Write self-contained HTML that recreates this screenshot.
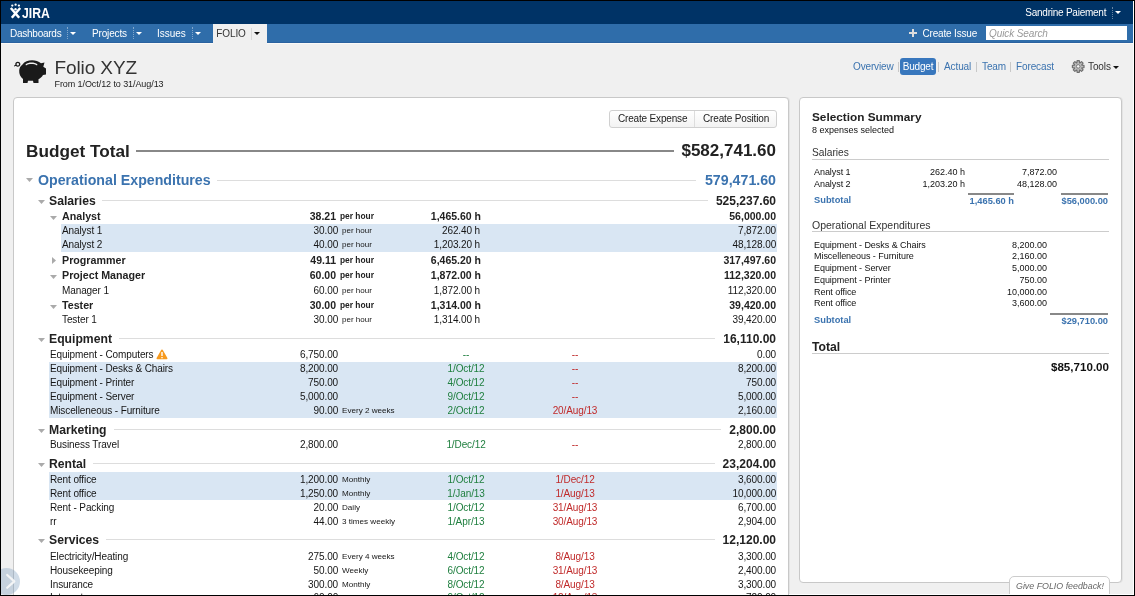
<!DOCTYPE html>
<html><head><meta charset="utf-8"><style>
html,body{margin:0;padding:0;}
body{width:1135px;height:596px;overflow:hidden;position:relative;background:#f0f0f0;font-family:"Liberation Sans",sans-serif;}
.t{position:absolute;line-height:20px;height:20px;white-space:nowrap;}
</style></head><body><div style="position:absolute;left:0;top:0;width:1135px;height:596px;will-change:transform;">
<div style="position:absolute;left:1px;top:1px;width:1133px;height:23px;background:#003366;"></div>
<div style="position:absolute;left:1px;top:24px;width:1133px;height:18px;background:#2f6daa;"></div>
<div style="position:absolute;left:1px;top:42px;width:1133px;height:1px;background:#2a62a0;"></div>
<div style="position:absolute;left:1px;top:43px;width:1133px;height:1px;background:#fbfaf7;"></div>
<svg style="position:absolute;left:9px;top:3px" width="13" height="16" viewBox="0 0 13 16">
<circle cx="3.3" cy="2.6" r="1.15" fill="#fff"/><circle cx="6.6" cy="1.7" r="1.15" fill="#fff"/><circle cx="9.9" cy="2.6" r="1.15" fill="#fff"/>
<circle cx="6.5" cy="6.2" r="1.2" fill="#fff"/>
<path d="M1.8 5.0 L10.2 14.8 M11.2 5.0 L2.8 14.8" stroke="#fff" stroke-width="2.5" fill="none"/>
</svg>
<div class="t" style="left:22px;top:3px;font-size:14px;font-weight:bold;color:#fff;transform:scaleX(0.87);transform-origin:0 0;">JIRA</div>
<div class="t" style="left:606px;width:500.24px;text-align:right;top:3px;font-size:10px;font-weight:normal;color:#fff;font-style:normal;letter-spacing:-0.24px;">Sandrine Paiement</div>
<div style="position:absolute;left:1112px;top:7px;width:0px;height:12px;border-left:1px dotted rgba(255,255,255,0.4);"></div>
<svg style="position:absolute;left:1115px;top:11px" width="6" height="3"><path d="M0 0 L6 0 L3.0 3 Z" fill="#fff"/></svg>
<div class="t" style="left:10px;top:24px;font-size:10px;font-weight:normal;color:#fff;font-style:normal;letter-spacing:-0.25px;">Dashboards</div>
<div style="position:absolute;left:67px;top:27px;width:0px;height:12px;border-left:1px dotted rgba(255,255,255,0.4);"></div>
<svg style="position:absolute;left:70px;top:32px" width="6" height="3"><path d="M0 0 L6 0 L3.0 3 Z" fill="#fff"/></svg>
<div class="t" style="left:92px;top:24px;font-size:10px;font-weight:normal;color:#fff;font-style:normal;letter-spacing:-0.15px;">Projects</div>
<div style="position:absolute;left:133px;top:27px;width:0px;height:12px;border-left:1px dotted rgba(255,255,255,0.4);"></div>
<svg style="position:absolute;left:136px;top:32px" width="6" height="3"><path d="M0 0 L6 0 L3.0 3 Z" fill="#fff"/></svg>
<div class="t" style="left:157px;top:24px;font-size:10px;font-weight:normal;color:#fff;font-style:normal;letter-spacing:-0.05px;">Issues</div>
<div style="position:absolute;left:192px;top:27px;width:0px;height:12px;border-left:1px dotted rgba(255,255,255,0.4);"></div>
<svg style="position:absolute;left:195px;top:32px" width="6" height="3"><path d="M0 0 L6 0 L3.0 3 Z" fill="#fff"/></svg>
<div style="position:absolute;left:213px;top:24px;width:54px;height:20px;background:#f0f0f0;"></div>
<div class="t" style="left:216.3px;top:24px;font-size:10px;font-weight:normal;color:#333;font-style:normal;letter-spacing:-0.1px;">FOLIO</div>
<div style="position:absolute;left:251px;top:28px;width:1px;height:12px;background:#d8d8d8;"></div>
<svg style="position:absolute;left:254px;top:32px" width="6" height="3"><path d="M0 0 L6 0 L3.0 3 Z" fill="#111"/></svg>
<div style="position:absolute;left:909px;top:32px;width:8px;height:2px;background:#ddd;"></div>
<div style="position:absolute;left:912px;top:29px;width:2px;height:8px;background:#ddd;"></div>
<div class="t" style="left:477px;width:500.17px;text-align:right;top:24px;font-size:10px;font-weight:normal;color:#fff;font-style:normal;letter-spacing:-0.17px;">Create Issue</div>
<div style="position:absolute;left:986px;top:26px;width:141px;height:14px;background:#fff;"></div>
<div class="t" style="left:989px;top:24px;font-size:10px;font-weight:normal;color:#999;font-style:italic;letter-spacing:-0.1px;">Quick Search</div>
<svg style="position:absolute;left:14px;top:59px" width="34" height="25" viewBox="0 0 34 25">
<path d="M8.5 5.5 C12 0.3 22 0 27 4.2 L30.5 3.6 L29.3 7.8 L32 9.5 L32 15.5 L29 16 C27.8 18.2 26.3 19.4 24.5 20.2 L24.5 24 L19.5 24 L19 21.8 L14 21.8 L13.5 24 L9 24 L9 20 C6.3 18 5 14.8 5.2 11.5 C5.3 9 6.6 6.9 8.5 5.5 Z" fill="#1a1a1a"/>
<path d="M11.5 5.4 C14.5 2.9 20.5 2.9 23.5 5.4 L23 6.4 C20 4.5 15 4.5 12 6.4 Z" fill="#f0f0f0"/>
<circle cx="3.8" cy="5.2" r="1.9" fill="none" stroke="#1a1a1a" stroke-width="1.3"/>
<path d="M0 7 L2.2 6.3" stroke="#1a1a1a" stroke-width="1"/>
</svg>
<div class="t" style="left:54.5px;top:58px;font-size:19px;font-weight:normal;color:#333;font-style:normal;letter-spacing:-0.1px;">Folio XYZ</div>
<div class="t" style="left:54.5px;top:74px;font-size:9px;font-weight:normal;color:#222;font-style:normal;letter-spacing:-0.08px;">From 1/Oct/12 to 31/Aug/13</div>
<div class="t" style="left:853px;top:57px;font-size:10px;font-weight:normal;color:#3b73af;font-style:normal;letter-spacing:-0.15px;">Overview</div>
<div style="position:absolute;left:898px;top:62px;width:1px;height:10px;background:#c8c8c8;"></div>
<div style="position:absolute;left:900px;top:58px;width:36px;height:17px;background:#3877bd;border-radius:3px;"></div>
<div class="t" style="left:668px;width:500px;text-align:center;top:57px;font-size:10px;font-weight:normal;color:#fff;font-style:normal;letter-spacing:-0.2px;">Budget</div>
<div style="position:absolute;left:938px;top:62px;width:1px;height:10px;background:#c8c8c8;"></div>
<div class="t" style="left:944px;top:57px;font-size:10px;font-weight:normal;color:#3b73af;font-style:normal;letter-spacing:-0.1px;">Actual</div>
<div style="position:absolute;left:976px;top:62px;width:1px;height:10px;background:#c8c8c8;"></div>
<div class="t" style="left:982px;top:57px;font-size:10px;font-weight:normal;color:#3b73af;font-style:normal;letter-spacing:-0.1px;">Team</div>
<div style="position:absolute;left:1010px;top:62px;width:1px;height:10px;background:#c8c8c8;"></div>
<div class="t" style="left:1016px;top:57px;font-size:10px;font-weight:normal;color:#3b73af;font-style:normal;letter-spacing:-0.12px;">Forecast</div>
<svg style="position:absolute;left:1071px;top:59px" width="15" height="15" viewBox="0 0 15 15">
<path d="M10.87 6.18 L13.00 6.39 L13.00 8.61 L10.87 8.82 L10.73 9.16 L12.08 10.82 L10.52 12.38 L8.86 11.03 L8.52 11.17 L8.31 13.30 L6.09 13.30 L5.88 11.17 L5.54 11.03 L3.88 12.38 L2.32 10.82 L3.67 9.16 L3.53 8.82 L1.40 8.61 L1.40 6.39 L3.53 6.18 L3.67 5.84 L2.32 4.18 L3.88 2.62 L5.54 3.97 L5.88 3.83 L6.09 1.70 L8.31 1.70 L8.52 3.83 L8.86 3.97 L10.52 2.62 L12.08 4.18 L10.73 5.84 Z" fill="#bdbdbd" stroke="#6f6f6f" stroke-width="1.2" stroke-linejoin="round"/>
<circle cx="7.2" cy="7.4" r="1.8" fill="#f4f4f4" stroke="#777" stroke-width="1"/></svg>
<div class="t" style="left:1088px;top:57px;font-size:10px;font-weight:normal;color:#333;font-style:normal;letter-spacing:-0.1px;">Tools</div>
<svg style="position:absolute;left:1112.5px;top:66px" width="6" height="3"><path d="M0 0 L6 0 L3.0 3 Z" fill="#111"/></svg>
<div style="position:absolute;left:13px;top:97px;width:776px;height:520px;background:#fff;border:1px solid #c8c8c8;border-radius:4px;box-sizing:border-box;box-shadow:1px 0 0 #e4e4e4;"></div>
<div style="position:absolute;left:799px;top:97px;width:323px;height:486px;background:#fff;border:1px solid #c8c8c8;border-radius:4px;box-sizing:border-box;box-shadow:1px 0 0 #e4e4e4;"></div>
<div style="position:absolute;left:609px;top:110px;width:168px;height:18px;background:linear-gradient(#fff,#f3f3f3);border:1px solid #d0d0d0;border-radius:3px;box-sizing:border-box;"></div>
<div style="position:absolute;left:694px;top:111px;width:1px;height:16px;background:#ddd;"></div>
<div class="t" style="left:618px;top:109px;font-size:10px;font-weight:normal;color:#222;font-style:normal;letter-spacing:-0.17px;">Create Expense</div>
<div class="t" style="left:703px;top:109px;font-size:10px;font-weight:normal;color:#222;font-style:normal;letter-spacing:-0.15px;">Create Position</div>
<div class="t" style="left:26px;top:141px;font-size:17.2px;font-weight:bold;color:#222;font-style:normal;">Budget Total</div>
<div style="position:absolute;left:136px;top:150px;width:538px;height:2px;background:#888;"></div>
<div class="t" style="left:276px;width:500px;text-align:right;top:141px;font-size:17px;font-weight:bold;color:#222;font-style:normal;">$582,741.60</div>
<svg style="position:absolute;left:26px;top:178px" width="7" height="4"><path d="M0 0 L7 0 L3.5 4 Z" fill="#aaa"/></svg>
<div class="t" style="left:38px;top:170px;font-size:14.2px;font-weight:bold;color:#3b73af;font-style:normal;">Operational Expenditures</div>
<div style="position:absolute;left:217px;top:180px;width:479px;height:1px;background:#ddd;"></div>
<div class="t" style="left:276px;width:500px;text-align:right;top:170px;font-size:14.2px;font-weight:bold;color:#3b73af;font-style:normal;">579,471.60</div>
<svg style="position:absolute;left:38px;top:200px" width="7" height="4"><path d="M0 0 L7 0 L3.5 4 Z" fill="#aaa"/></svg>
<div class="t" style="left:49px;top:191px;font-size:12.2px;font-weight:bold;color:#222;font-style:normal;">Salaries</div>
<div style="position:absolute;left:102px;top:200px;width:606px;height:1px;background:#ddd;"></div>
<div class="t" style="left:276px;width:500px;text-align:right;top:191px;font-size:12px;font-weight:bold;color:#222;font-style:normal;">525,237.60</div>
<svg style="position:absolute;left:50px;top:216px" width="7" height="4"><path d="M0 0 L7 0 L3.5 4 Z" fill="#aaa"/></svg>
<div class="t" style="left:62px;top:206px;font-size:10.7px;font-weight:bold;color:#222;font-style:normal;">Analyst</div>
<div class="t" style="left:-164px;width:500px;text-align:right;top:206px;font-size:10.5px;font-weight:bold;color:#222;font-style:normal;">38.21</div>
<div class="t" style="left:340px;top:206px;font-size:8.4px;font-weight:bold;color:#222;font-style:normal;">per hour</div>
<div class="t" style="left:-19px;width:500px;text-align:right;top:206px;font-size:10.5px;font-weight:bold;color:#222;font-style:normal;">1,465.60 h</div>
<div class="t" style="left:276px;width:500px;text-align:right;top:206px;font-size:10.5px;font-weight:bold;color:#222;font-style:normal;">56,000.00</div>
<div style="position:absolute;left:61px;top:224px;width:716px;height:14px;background:#d9e6f3;"></div>
<div class="t" style="left:62px;top:221px;font-size:10px;font-weight:normal;color:#151515;font-style:normal;letter-spacing:-0.1px;">Analyst 1</div>
<div class="t" style="left:-162px;width:500.1px;text-align:right;top:221px;font-size:10px;font-weight:normal;color:#151515;font-style:normal;letter-spacing:-0.1px;">30.00</div>
<div class="t" style="left:342px;top:221px;font-size:8px;font-weight:normal;color:#151515;font-style:normal;">per hour</div>
<div class="t" style="left:-20px;width:500.1px;text-align:right;top:221px;font-size:10px;font-weight:normal;color:#151515;font-style:normal;letter-spacing:-0.1px;">262.40 h</div>
<div class="t" style="left:276px;width:500.1px;text-align:right;top:221px;font-size:10px;font-weight:normal;color:#151515;font-style:normal;letter-spacing:-0.1px;">7,872.00</div>
<div style="position:absolute;left:61px;top:238px;width:716px;height:14px;background:#d9e6f3;"></div>
<div class="t" style="left:62px;top:235px;font-size:10px;font-weight:normal;color:#151515;font-style:normal;letter-spacing:-0.1px;">Analyst 2</div>
<div class="t" style="left:-162px;width:500.1px;text-align:right;top:235px;font-size:10px;font-weight:normal;color:#151515;font-style:normal;letter-spacing:-0.1px;">40.00</div>
<div class="t" style="left:342px;top:235px;font-size:8px;font-weight:normal;color:#151515;font-style:normal;">per hour</div>
<div class="t" style="left:-20px;width:500.1px;text-align:right;top:235px;font-size:10px;font-weight:normal;color:#151515;font-style:normal;letter-spacing:-0.1px;">1,203.20 h</div>
<div class="t" style="left:276px;width:500.1px;text-align:right;top:235px;font-size:10px;font-weight:normal;color:#151515;font-style:normal;letter-spacing:-0.1px;">48,128.00</div>
<svg style="position:absolute;left:52px;top:257px" width="4" height="7"><path d="M0 0 L4 3.5 L0 7 Z" fill="#aaa"/></svg>
<div class="t" style="left:62px;top:250px;font-size:10.7px;font-weight:bold;color:#222;font-style:normal;">Programmer</div>
<div class="t" style="left:-164px;width:500px;text-align:right;top:250px;font-size:10.5px;font-weight:bold;color:#222;font-style:normal;">49.11</div>
<div class="t" style="left:340px;top:250px;font-size:8.4px;font-weight:bold;color:#222;font-style:normal;">per hour</div>
<div class="t" style="left:-19px;width:500px;text-align:right;top:250px;font-size:10.5px;font-weight:bold;color:#222;font-style:normal;">6,465.20 h</div>
<div class="t" style="left:276px;width:500px;text-align:right;top:250px;font-size:10.5px;font-weight:bold;color:#222;font-style:normal;">317,497.60</div>
<svg style="position:absolute;left:50px;top:275px" width="7" height="4"><path d="M0 0 L7 0 L3.5 4 Z" fill="#aaa"/></svg>
<div class="t" style="left:62px;top:265px;font-size:10.7px;font-weight:bold;color:#222;font-style:normal;">Project Manager</div>
<div class="t" style="left:-164px;width:500px;text-align:right;top:265px;font-size:10.5px;font-weight:bold;color:#222;font-style:normal;">60.00</div>
<div class="t" style="left:340px;top:265px;font-size:8.4px;font-weight:bold;color:#222;font-style:normal;">per hour</div>
<div class="t" style="left:-19px;width:500px;text-align:right;top:265px;font-size:10.5px;font-weight:bold;color:#222;font-style:normal;">1,872.00 h</div>
<div class="t" style="left:276px;width:500px;text-align:right;top:265px;font-size:10.5px;font-weight:bold;color:#222;font-style:normal;">112,320.00</div>
<div class="t" style="left:62px;top:281px;font-size:10px;font-weight:normal;color:#151515;font-style:normal;letter-spacing:-0.1px;">Manager 1</div>
<div class="t" style="left:-162px;width:500.1px;text-align:right;top:281px;font-size:10px;font-weight:normal;color:#151515;font-style:normal;letter-spacing:-0.1px;">60.00</div>
<div class="t" style="left:342px;top:281px;font-size:8px;font-weight:normal;color:#151515;font-style:normal;">per hour</div>
<div class="t" style="left:-20px;width:500.1px;text-align:right;top:281px;font-size:10px;font-weight:normal;color:#151515;font-style:normal;letter-spacing:-0.1px;">1,872.00 h</div>
<div class="t" style="left:276px;width:500.1px;text-align:right;top:281px;font-size:10px;font-weight:normal;color:#151515;font-style:normal;letter-spacing:-0.1px;">112,320.00</div>
<svg style="position:absolute;left:50px;top:305px" width="7" height="4"><path d="M0 0 L7 0 L3.5 4 Z" fill="#aaa"/></svg>
<div class="t" style="left:62px;top:295px;font-size:10.7px;font-weight:bold;color:#222;font-style:normal;">Tester</div>
<div class="t" style="left:-164px;width:500px;text-align:right;top:295px;font-size:10.5px;font-weight:bold;color:#222;font-style:normal;">30.00</div>
<div class="t" style="left:340px;top:295px;font-size:8.4px;font-weight:bold;color:#222;font-style:normal;">per hour</div>
<div class="t" style="left:-19px;width:500px;text-align:right;top:295px;font-size:10.5px;font-weight:bold;color:#222;font-style:normal;">1,314.00 h</div>
<div class="t" style="left:276px;width:500px;text-align:right;top:295px;font-size:10.5px;font-weight:bold;color:#222;font-style:normal;">39,420.00</div>
<div class="t" style="left:62px;top:310px;font-size:10px;font-weight:normal;color:#151515;font-style:normal;letter-spacing:-0.1px;">Tester 1</div>
<div class="t" style="left:-162px;width:500.1px;text-align:right;top:310px;font-size:10px;font-weight:normal;color:#151515;font-style:normal;letter-spacing:-0.1px;">30.00</div>
<div class="t" style="left:342px;top:310px;font-size:8px;font-weight:normal;color:#151515;font-style:normal;">per hour</div>
<div class="t" style="left:-20px;width:500.1px;text-align:right;top:310px;font-size:10px;font-weight:normal;color:#151515;font-style:normal;letter-spacing:-0.1px;">1,314.00 h</div>
<div class="t" style="left:276px;width:500.1px;text-align:right;top:310px;font-size:10px;font-weight:normal;color:#151515;font-style:normal;letter-spacing:-0.1px;">39,420.00</div>
<svg style="position:absolute;left:38px;top:338px" width="7" height="4"><path d="M0 0 L7 0 L3.5 4 Z" fill="#aaa"/></svg>
<div class="t" style="left:49px;top:329px;font-size:12.2px;font-weight:bold;color:#222;font-style:normal;">Equipment</div>
<div style="position:absolute;left:119px;top:338px;width:596px;height:1px;background:#ddd;"></div>
<div class="t" style="left:276px;width:500px;text-align:right;top:329px;font-size:12px;font-weight:bold;color:#222;font-style:normal;">16,110.00</div>
<div class="t" style="left:50px;top:345px;font-size:10px;font-weight:normal;color:#151515;font-style:normal;letter-spacing:-0.1px;">Equipment - Computers</div>
<div class="t" style="left:-162px;width:500.1px;text-align:right;top:345px;font-size:10px;font-weight:normal;color:#151515;font-style:normal;letter-spacing:-0.1px;">6,750.00</div>
<div class="t" style="left:216px;width:500px;text-align:center;top:345px;font-size:10px;font-weight:normal;color:#1f7f3f;font-style:normal;letter-spacing:-0.1px;">--</div>
<div class="t" style="left:325px;width:500px;text-align:center;top:345px;font-size:10px;font-weight:normal;color:#c02a2a;font-style:normal;letter-spacing:-0.1px;">--</div>
<div class="t" style="left:276px;width:500.1px;text-align:right;top:345px;font-size:10px;font-weight:normal;color:#151515;font-style:normal;letter-spacing:-0.1px;">0.00</div>
<svg style="position:absolute;left:156px;top:349px" width="12" height="11" viewBox="0 0 12 11">
<path d="M6 0.6 Q6.7 0.6 7.1 1.4 L11.4 9 Q11.8 10.3 10.5 10.3 L1.5 10.3 Q0.2 10.3 0.6 9 L4.9 1.4 Q5.3 0.6 6 0.6 Z" fill="#f79a1e"/>
<rect x="5.3" y="3" width="1.4" height="4" fill="#fff"/><rect x="5.3" y="8" width="1.4" height="1.3" fill="#fff"/></svg>
<div style="position:absolute;left:49px;top:362px;width:728px;height:14px;background:#d9e6f3;"></div>
<div class="t" style="left:50px;top:359px;font-size:10px;font-weight:normal;color:#151515;font-style:normal;letter-spacing:-0.1px;">Equipment - Desks &amp; Chairs</div>
<div class="t" style="left:-162px;width:500.1px;text-align:right;top:359px;font-size:10px;font-weight:normal;color:#151515;font-style:normal;letter-spacing:-0.1px;">8,200.00</div>
<div class="t" style="left:216px;width:500px;text-align:center;top:359px;font-size:10px;font-weight:normal;color:#1f7f3f;font-style:normal;letter-spacing:-0.1px;">1/Oct/12</div>
<div class="t" style="left:325px;width:500px;text-align:center;top:359px;font-size:10px;font-weight:normal;color:#c02a2a;font-style:normal;letter-spacing:-0.1px;">--</div>
<div class="t" style="left:276px;width:500.1px;text-align:right;top:359px;font-size:10px;font-weight:normal;color:#151515;font-style:normal;letter-spacing:-0.1px;">8,200.00</div>
<div style="position:absolute;left:49px;top:376px;width:728px;height:14px;background:#d9e6f3;"></div>
<div class="t" style="left:50px;top:373px;font-size:10px;font-weight:normal;color:#151515;font-style:normal;letter-spacing:-0.1px;">Equipment - Printer</div>
<div class="t" style="left:-162px;width:500.1px;text-align:right;top:373px;font-size:10px;font-weight:normal;color:#151515;font-style:normal;letter-spacing:-0.1px;">750.00</div>
<div class="t" style="left:216px;width:500px;text-align:center;top:373px;font-size:10px;font-weight:normal;color:#1f7f3f;font-style:normal;letter-spacing:-0.1px;">4/Oct/12</div>
<div class="t" style="left:325px;width:500px;text-align:center;top:373px;font-size:10px;font-weight:normal;color:#c02a2a;font-style:normal;letter-spacing:-0.1px;">--</div>
<div class="t" style="left:276px;width:500.1px;text-align:right;top:373px;font-size:10px;font-weight:normal;color:#151515;font-style:normal;letter-spacing:-0.1px;">750.00</div>
<div style="position:absolute;left:49px;top:390px;width:728px;height:14px;background:#d9e6f3;"></div>
<div class="t" style="left:50px;top:387px;font-size:10px;font-weight:normal;color:#151515;font-style:normal;letter-spacing:-0.1px;">Equipment - Server</div>
<div class="t" style="left:-162px;width:500.1px;text-align:right;top:387px;font-size:10px;font-weight:normal;color:#151515;font-style:normal;letter-spacing:-0.1px;">5,000.00</div>
<div class="t" style="left:216px;width:500px;text-align:center;top:387px;font-size:10px;font-weight:normal;color:#1f7f3f;font-style:normal;letter-spacing:-0.1px;">9/Oct/12</div>
<div class="t" style="left:325px;width:500px;text-align:center;top:387px;font-size:10px;font-weight:normal;color:#c02a2a;font-style:normal;letter-spacing:-0.1px;">--</div>
<div class="t" style="left:276px;width:500.1px;text-align:right;top:387px;font-size:10px;font-weight:normal;color:#151515;font-style:normal;letter-spacing:-0.1px;">5,000.00</div>
<div style="position:absolute;left:49px;top:404px;width:728px;height:14px;background:#d9e6f3;"></div>
<div class="t" style="left:50px;top:401px;font-size:10px;font-weight:normal;color:#151515;font-style:normal;letter-spacing:-0.1px;">Miscelleneous - Furniture</div>
<div class="t" style="left:-162px;width:500.1px;text-align:right;top:401px;font-size:10px;font-weight:normal;color:#151515;font-style:normal;letter-spacing:-0.1px;">90.00</div>
<div class="t" style="left:342px;top:401px;font-size:8.1px;font-weight:normal;color:#151515;font-style:normal;">Every 2 weeks</div>
<div class="t" style="left:216px;width:500px;text-align:center;top:401px;font-size:10px;font-weight:normal;color:#1f7f3f;font-style:normal;letter-spacing:-0.1px;">2/Oct/12</div>
<div class="t" style="left:325px;width:500px;text-align:center;top:401px;font-size:10px;font-weight:normal;color:#c02a2a;font-style:normal;letter-spacing:-0.1px;">20/Aug/13</div>
<div class="t" style="left:276px;width:500.1px;text-align:right;top:401px;font-size:10px;font-weight:normal;color:#151515;font-style:normal;letter-spacing:-0.1px;">2,160.00</div>
<svg style="position:absolute;left:38px;top:429px" width="7" height="4"><path d="M0 0 L7 0 L3.5 4 Z" fill="#aaa"/></svg>
<div class="t" style="left:49px;top:420px;font-size:12.2px;font-weight:bold;color:#222;font-style:normal;">Marketing</div>
<div style="position:absolute;left:114px;top:429px;width:607px;height:1px;background:#ddd;"></div>
<div class="t" style="left:276px;width:500px;text-align:right;top:420px;font-size:12px;font-weight:bold;color:#222;font-style:normal;">2,800.00</div>
<div class="t" style="left:50px;top:435px;font-size:10px;font-weight:normal;color:#151515;font-style:normal;letter-spacing:-0.1px;">Business Travel</div>
<div class="t" style="left:-162px;width:500.1px;text-align:right;top:435px;font-size:10px;font-weight:normal;color:#151515;font-style:normal;letter-spacing:-0.1px;">2,800.00</div>
<div class="t" style="left:216px;width:500px;text-align:center;top:435px;font-size:10px;font-weight:normal;color:#1f7f3f;font-style:normal;letter-spacing:-0.1px;">1/Dec/12</div>
<div class="t" style="left:325px;width:500px;text-align:center;top:435px;font-size:10px;font-weight:normal;color:#c02a2a;font-style:normal;letter-spacing:-0.1px;">--</div>
<div class="t" style="left:276px;width:500.1px;text-align:right;top:435px;font-size:10px;font-weight:normal;color:#151515;font-style:normal;letter-spacing:-0.1px;">2,800.00</div>
<svg style="position:absolute;left:38px;top:463px" width="7" height="4"><path d="M0 0 L7 0 L3.5 4 Z" fill="#aaa"/></svg>
<div class="t" style="left:49px;top:454px;font-size:12.2px;font-weight:bold;color:#222;font-style:normal;">Rental</div>
<div style="position:absolute;left:93px;top:463px;width:622px;height:1px;background:#ddd;"></div>
<div class="t" style="left:276px;width:500px;text-align:right;top:454px;font-size:12px;font-weight:bold;color:#222;font-style:normal;">23,204.00</div>
<div style="position:absolute;left:49px;top:472px;width:728px;height:14px;background:#d9e6f3;"></div>
<div class="t" style="left:50px;top:470px;font-size:10px;font-weight:normal;color:#151515;font-style:normal;letter-spacing:-0.1px;">Rent office</div>
<div class="t" style="left:-162px;width:500.1px;text-align:right;top:470px;font-size:10px;font-weight:normal;color:#151515;font-style:normal;letter-spacing:-0.1px;">1,200.00</div>
<div class="t" style="left:342px;top:470px;font-size:8.1px;font-weight:normal;color:#151515;font-style:normal;">Monthly</div>
<div class="t" style="left:216px;width:500px;text-align:center;top:470px;font-size:10px;font-weight:normal;color:#1f7f3f;font-style:normal;letter-spacing:-0.1px;">1/Oct/12</div>
<div class="t" style="left:325px;width:500px;text-align:center;top:470px;font-size:10px;font-weight:normal;color:#c02a2a;font-style:normal;letter-spacing:-0.1px;">1/Dec/12</div>
<div class="t" style="left:276px;width:500.1px;text-align:right;top:470px;font-size:10px;font-weight:normal;color:#151515;font-style:normal;letter-spacing:-0.1px;">3,600.00</div>
<div style="position:absolute;left:49px;top:486px;width:728px;height:14px;background:#d9e6f3;"></div>
<div class="t" style="left:50px;top:484px;font-size:10px;font-weight:normal;color:#151515;font-style:normal;letter-spacing:-0.1px;">Rent office</div>
<div class="t" style="left:-162px;width:500.1px;text-align:right;top:484px;font-size:10px;font-weight:normal;color:#151515;font-style:normal;letter-spacing:-0.1px;">1,250.00</div>
<div class="t" style="left:342px;top:484px;font-size:8.1px;font-weight:normal;color:#151515;font-style:normal;">Monthly</div>
<div class="t" style="left:216px;width:500px;text-align:center;top:484px;font-size:10px;font-weight:normal;color:#1f7f3f;font-style:normal;letter-spacing:-0.1px;">1/Jan/13</div>
<div class="t" style="left:325px;width:500px;text-align:center;top:484px;font-size:10px;font-weight:normal;color:#c02a2a;font-style:normal;letter-spacing:-0.1px;">1/Aug/13</div>
<div class="t" style="left:276px;width:500.1px;text-align:right;top:484px;font-size:10px;font-weight:normal;color:#151515;font-style:normal;letter-spacing:-0.1px;">10,000.00</div>
<div class="t" style="left:50px;top:498px;font-size:10px;font-weight:normal;color:#151515;font-style:normal;letter-spacing:-0.1px;">Rent - Packing</div>
<div class="t" style="left:-162px;width:500.1px;text-align:right;top:498px;font-size:10px;font-weight:normal;color:#151515;font-style:normal;letter-spacing:-0.1px;">20.00</div>
<div class="t" style="left:342px;top:498px;font-size:8.1px;font-weight:normal;color:#151515;font-style:normal;">Daily</div>
<div class="t" style="left:216px;width:500px;text-align:center;top:498px;font-size:10px;font-weight:normal;color:#1f7f3f;font-style:normal;letter-spacing:-0.1px;">1/Oct/12</div>
<div class="t" style="left:325px;width:500px;text-align:center;top:498px;font-size:10px;font-weight:normal;color:#c02a2a;font-style:normal;letter-spacing:-0.1px;">31/Aug/13</div>
<div class="t" style="left:276px;width:500.1px;text-align:right;top:498px;font-size:10px;font-weight:normal;color:#151515;font-style:normal;letter-spacing:-0.1px;">6,700.00</div>
<div class="t" style="left:50px;top:512px;font-size:10px;font-weight:normal;color:#151515;font-style:normal;letter-spacing:-0.1px;">rr</div>
<div class="t" style="left:-162px;width:500.1px;text-align:right;top:512px;font-size:10px;font-weight:normal;color:#151515;font-style:normal;letter-spacing:-0.1px;">44.00</div>
<div class="t" style="left:342px;top:512px;font-size:8.1px;font-weight:normal;color:#151515;font-style:normal;">3 times weekly</div>
<div class="t" style="left:216px;width:500px;text-align:center;top:512px;font-size:10px;font-weight:normal;color:#1f7f3f;font-style:normal;letter-spacing:-0.1px;">1/Apr/13</div>
<div class="t" style="left:325px;width:500px;text-align:center;top:512px;font-size:10px;font-weight:normal;color:#c02a2a;font-style:normal;letter-spacing:-0.1px;">30/Aug/13</div>
<div class="t" style="left:276px;width:500.1px;text-align:right;top:512px;font-size:10px;font-weight:normal;color:#151515;font-style:normal;letter-spacing:-0.1px;">2,904.00</div>
<svg style="position:absolute;left:38px;top:539px" width="7" height="4"><path d="M0 0 L7 0 L3.5 4 Z" fill="#aaa"/></svg>
<div class="t" style="left:49px;top:530px;font-size:12.2px;font-weight:bold;color:#222;font-style:normal;">Services</div>
<div style="position:absolute;left:106px;top:539px;width:609px;height:1px;background:#ddd;"></div>
<div class="t" style="left:276px;width:500px;text-align:right;top:530px;font-size:12px;font-weight:bold;color:#222;font-style:normal;">12,120.00</div>
<div class="t" style="left:50px;top:547px;font-size:10px;font-weight:normal;color:#151515;font-style:normal;letter-spacing:-0.1px;">Electricity/Heating</div>
<div class="t" style="left:-162px;width:500.1px;text-align:right;top:547px;font-size:10px;font-weight:normal;color:#151515;font-style:normal;letter-spacing:-0.1px;">275.00</div>
<div class="t" style="left:342px;top:547px;font-size:8.1px;font-weight:normal;color:#151515;font-style:normal;">Every 4 weeks</div>
<div class="t" style="left:216px;width:500px;text-align:center;top:547px;font-size:10px;font-weight:normal;color:#1f7f3f;font-style:normal;letter-spacing:-0.1px;">4/Oct/12</div>
<div class="t" style="left:325px;width:500px;text-align:center;top:547px;font-size:10px;font-weight:normal;color:#c02a2a;font-style:normal;letter-spacing:-0.1px;">8/Aug/13</div>
<div class="t" style="left:276px;width:500.1px;text-align:right;top:547px;font-size:10px;font-weight:normal;color:#151515;font-style:normal;letter-spacing:-0.1px;">3,300.00</div>
<div class="t" style="left:50px;top:561px;font-size:10px;font-weight:normal;color:#151515;font-style:normal;letter-spacing:-0.1px;">Housekeeping</div>
<div class="t" style="left:-162px;width:500.1px;text-align:right;top:561px;font-size:10px;font-weight:normal;color:#151515;font-style:normal;letter-spacing:-0.1px;">50.00</div>
<div class="t" style="left:342px;top:561px;font-size:8.1px;font-weight:normal;color:#151515;font-style:normal;">Weekly</div>
<div class="t" style="left:216px;width:500px;text-align:center;top:561px;font-size:10px;font-weight:normal;color:#1f7f3f;font-style:normal;letter-spacing:-0.1px;">6/Oct/12</div>
<div class="t" style="left:325px;width:500px;text-align:center;top:561px;font-size:10px;font-weight:normal;color:#c02a2a;font-style:normal;letter-spacing:-0.1px;">31/Aug/13</div>
<div class="t" style="left:276px;width:500.1px;text-align:right;top:561px;font-size:10px;font-weight:normal;color:#151515;font-style:normal;letter-spacing:-0.1px;">2,400.00</div>
<div class="t" style="left:50px;top:575px;font-size:10px;font-weight:normal;color:#151515;font-style:normal;letter-spacing:-0.1px;">Insurance</div>
<div class="t" style="left:-162px;width:500.1px;text-align:right;top:575px;font-size:10px;font-weight:normal;color:#151515;font-style:normal;letter-spacing:-0.1px;">300.00</div>
<div class="t" style="left:342px;top:575px;font-size:8.1px;font-weight:normal;color:#151515;font-style:normal;">Monthly</div>
<div class="t" style="left:216px;width:500px;text-align:center;top:575px;font-size:10px;font-weight:normal;color:#1f7f3f;font-style:normal;letter-spacing:-0.1px;">8/Oct/12</div>
<div class="t" style="left:325px;width:500px;text-align:center;top:575px;font-size:10px;font-weight:normal;color:#c02a2a;font-style:normal;letter-spacing:-0.1px;">8/Aug/13</div>
<div class="t" style="left:276px;width:500.1px;text-align:right;top:575px;font-size:10px;font-weight:normal;color:#151515;font-style:normal;letter-spacing:-0.1px;">3,300.00</div>
<div class="t" style="left:50px;top:588px;font-size:10px;font-weight:normal;color:#151515;font-style:normal;letter-spacing:-0.1px;">Internet</div>
<div class="t" style="left:-162px;width:500.1px;text-align:right;top:588px;font-size:10px;font-weight:normal;color:#151515;font-style:normal;letter-spacing:-0.1px;">60.00</div>
<div class="t" style="left:342px;top:588px;font-size:8.1px;font-weight:normal;color:#151515;font-style:normal;">Every 4 weeks</div>
<div class="t" style="left:216px;width:500px;text-align:center;top:588px;font-size:10px;font-weight:normal;color:#1f7f3f;font-style:normal;letter-spacing:-0.1px;">9/Oct/12</div>
<div class="t" style="left:325px;width:500px;text-align:center;top:588px;font-size:10px;font-weight:normal;color:#c02a2a;font-style:normal;letter-spacing:-0.1px;">12/Aug/13</div>
<div class="t" style="left:276px;width:500.1px;text-align:right;top:588px;font-size:10px;font-weight:normal;color:#151515;font-style:normal;letter-spacing:-0.1px;">720.00</div>
<div class="t" style="left:812px;top:107px;font-size:11.8px;font-weight:bold;color:#222;font-style:normal;">Selection Summary</div>
<div class="t" style="left:812px;top:120px;font-size:9px;font-weight:normal;color:#111;font-style:normal;">8 expenses selected</div>
<div class="t" style="left:812px;top:143px;font-size:10.2px;font-weight:normal;color:#333;font-style:normal;">Salaries</div>
<div style="position:absolute;left:812px;top:159px;width:297px;height:1px;background:#ccc;"></div>
<div class="t" style="left:814px;top:162px;font-size:9px;font-weight:normal;color:#111;font-style:normal;letter-spacing:-0.05px;">Analyst 1</div>
<div class="t" style="left:465px;width:500px;text-align:right;top:162px;font-size:9px;font-weight:normal;color:#111;font-style:normal;">262.40 h</div>
<div class="t" style="left:557px;width:500px;text-align:right;top:162px;font-size:9px;font-weight:normal;color:#111;font-style:normal;">7,872.00</div>
<div class="t" style="left:814px;top:174px;font-size:9px;font-weight:normal;color:#111;font-style:normal;letter-spacing:-0.05px;">Analyst 2</div>
<div class="t" style="left:465px;width:500px;text-align:right;top:174px;font-size:9px;font-weight:normal;color:#111;font-style:normal;">1,203.20 h</div>
<div class="t" style="left:557px;width:500px;text-align:right;top:174px;font-size:9px;font-weight:normal;color:#111;font-style:normal;">48,128.00</div>
<div style="position:absolute;left:968px;top:193px;width:46px;height:2px;background:#888;"></div>
<div style="position:absolute;left:1061px;top:193px;width:47px;height:2px;background:#888;"></div>
<div class="t" style="left:814px;top:190px;font-size:9.3px;font-weight:bold;color:#3b73af;font-style:normal;">Subtotal</div>
<div class="t" style="left:514px;width:500px;text-align:right;top:191px;font-size:9.3px;font-weight:bold;color:#3b73af;font-style:normal;">1,465.60 h</div>
<div class="t" style="left:608px;width:500px;text-align:right;top:191px;font-size:9.3px;font-weight:bold;color:#3b73af;font-style:normal;">$56,000.00</div>
<div class="t" style="left:812px;top:215px;font-size:10.5px;font-weight:normal;color:#333;font-style:normal;">Operational Expenditures</div>
<div style="position:absolute;left:812px;top:231px;width:297px;height:1px;background:#ccc;"></div>
<div class="t" style="left:814px;top:235px;font-size:9px;font-weight:normal;color:#111;font-style:normal;letter-spacing:-0.05px;">Equipment - Desks &amp; Chairs</div>
<div class="t" style="left:547px;width:500px;text-align:right;top:235px;font-size:9px;font-weight:normal;color:#111;font-style:normal;">8,200.00</div>
<div class="t" style="left:814px;top:246px;font-size:9px;font-weight:normal;color:#111;font-style:normal;letter-spacing:-0.05px;">Miscelleneous - Furniture</div>
<div class="t" style="left:547px;width:500px;text-align:right;top:246px;font-size:9px;font-weight:normal;color:#111;font-style:normal;">2,160.00</div>
<div class="t" style="left:814px;top:258px;font-size:9px;font-weight:normal;color:#111;font-style:normal;letter-spacing:-0.05px;">Equipment - Server</div>
<div class="t" style="left:547px;width:500px;text-align:right;top:258px;font-size:9px;font-weight:normal;color:#111;font-style:normal;">5,000.00</div>
<div class="t" style="left:814px;top:270px;font-size:9px;font-weight:normal;color:#111;font-style:normal;letter-spacing:-0.05px;">Equipment - Printer</div>
<div class="t" style="left:547px;width:500px;text-align:right;top:270px;font-size:9px;font-weight:normal;color:#111;font-style:normal;">750.00</div>
<div class="t" style="left:814px;top:282px;font-size:9px;font-weight:normal;color:#111;font-style:normal;letter-spacing:-0.05px;">Rent office</div>
<div class="t" style="left:547px;width:500px;text-align:right;top:282px;font-size:9px;font-weight:normal;color:#111;font-style:normal;">10,000.00</div>
<div class="t" style="left:814px;top:293px;font-size:9px;font-weight:normal;color:#111;font-style:normal;letter-spacing:-0.05px;">Rent office</div>
<div class="t" style="left:547px;width:500px;text-align:right;top:293px;font-size:9px;font-weight:normal;color:#111;font-style:normal;">3,600.00</div>
<div style="position:absolute;left:1050px;top:313px;width:58px;height:2px;background:#888;"></div>
<div class="t" style="left:814px;top:310px;font-size:9.3px;font-weight:bold;color:#3b73af;font-style:normal;">Subtotal</div>
<div class="t" style="left:608px;width:500px;text-align:right;top:311px;font-size:9.3px;font-weight:bold;color:#3b73af;font-style:normal;">$29,710.00</div>
<div class="t" style="left:812px;top:337px;font-size:12.2px;font-weight:bold;color:#222;font-style:normal;">Total</div>
<div style="position:absolute;left:812px;top:353px;width:297px;height:1px;background:#ccc;"></div>
<div class="t" style="left:609px;width:500px;text-align:right;top:357px;font-size:11.6px;font-weight:bold;color:#111;font-style:normal;">$85,710.00</div>
<div style="position:absolute;left:1009px;top:576px;width:101px;height:30px;background:#fff;border:1px solid #ccc;border-radius:5px 5px 0 0;box-sizing:border-box;"></div>
<div class="t" style="left:604px;width:500px;text-align:right;top:576px;font-size:8.85px;font-weight:normal;color:#666;font-style:italic;">Give FOLIO feedback!</div>
<div style="position:absolute;left:-7px;top:568px;width:27px;height:27px;background:rgba(120,155,190,0.35);border-radius:50%;"></div>
<svg style="position:absolute;left:0px;top:568px" width="20" height="27" viewBox="0 568 20 27">
<path d="M7.2 575 L14.3 581.4 L7.2 587.8" fill="none" stroke="rgba(250,250,250,0.9)" stroke-width="2.2" stroke-linecap="round" stroke-linejoin="round"/></svg>
<div style="position:absolute;left:1133px;top:0px;width:1px;height:596px;background:#fff;"></div>
<div style="position:absolute;left:789px;top:594px;width:346px;height:1px;background:#fff;"></div>
<div style="position:absolute;left:0px;top:0px;width:1135px;height:1px;background:#000;"></div>
<div style="position:absolute;left:0px;top:0px;width:1px;height:596px;background:#000;"></div>
<div style="position:absolute;left:1134px;top:0px;width:1px;height:596px;background:#000;"></div>
<div style="position:absolute;left:0px;top:595px;width:1135px;height:1px;background:#000;"></div>
</div></body></html>
